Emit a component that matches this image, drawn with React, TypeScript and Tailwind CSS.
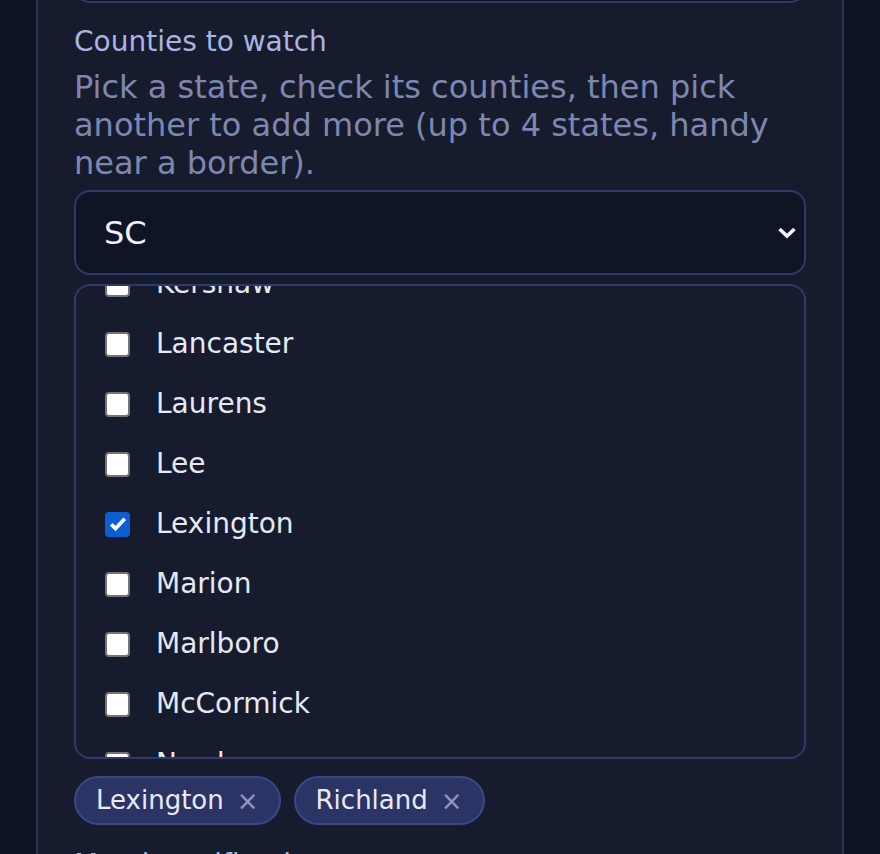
import React, { useEffect, useRef } from "react";

const counties = [
  "Abbeville", "Aiken", "Allendale", "Anderson", "Bamberg", "Barnwell", "Beaufort", "Berkeley",
  "Calhoun", "Charleston", "Cherokee", "Chester", "Chesterfield", "Clarendon", "Colleton",
  "Darlington", "Dillon", "Dorchester", "Edgefield", "Fairfield", "Florence", "Georgetown",
  "Greenville", "Greenwood", "Hampton", "Horry", "Jasper", "Kershaw", "Lancaster", "Laurens",
  "Lee", "Lexington", "Marion", "Marlboro", "McCormick", "Newberry", "Oconee", "Orangeburg",
  "Pickens", "Richland", "Saluda", "Spartanburg", "Sumter", "Union", "Williamsburg", "York",
];

const selected = ["Lexington", "Richland"];

function Checkbox({ checked }: { checked: boolean }) {
  if (checked) {
    return (
      <span className="flex h-[25px] w-[25px] shrink-0 items-center justify-center rounded-[4px] bg-[#0b5fd0]">
        <svg width="20" height="20" viewBox="0 0 16 16" fill="none">
          <path d="M2.6 8.2l3.4 3.4L13.4 3.8" stroke="white" strokeWidth="3" strokeLinecap="butt" />
        </svg>
      </span>
    );
  }
  return <span className="h-[25px] w-[25px] shrink-0 rounded-[4px] border-2 border-[#747474] bg-white" />;
}

export default function App() {
  const listRef = useRef<HTMLDivElement | null>(null);

  useEffect(() => {
    // keep the list scrolled to where Kershaw sits at the top edge
    if (listRef.current) listRef.current.scrollTop = 1662;
  }, []);

  return (
    <div className="h-[854px] w-[880px] overflow-hidden bg-[#0e1322] font-['DejaVu_Sans',sans-serif]">
      <div className="mx-[36px] flex h-full flex-col border-x-2 border-[#283258] bg-[#161c2e] px-[36px]">
        <div className="-mt-[40px] h-[43px] shrink-0 rounded-b-[16px] border-2 border-[#2e3a6b] bg-[#0f1524]" />

        <div className="mt-[22px] text-[28px] leading-[33px] text-[#aab4e2]">Counties to watch</div>
        <p className="mt-[10px] text-[32px] leading-[38px] text-[#7d87b0]">
          Pick a state, check its counties, then pick another to add more (up to 4 states, handy near a border).
        </p>

        <div className="mt-[8px] flex h-[85px] shrink-0 items-center justify-between rounded-[16px] border-2 border-[#2e3a6b] bg-[#0f1524] pl-[28px] pr-[7px]">
          <span className="text-[32px] text-[#f0f2f8]">SC</span>
          <svg width="20" height="14" viewBox="0 0 20 14" fill="none">
            <path d="M2.5 3l7.5 7 7.5-7" stroke="#f0f2f8" strokeWidth="3.6" />
          </svg>
        </div>

        <div
          ref={listRef}
          className="mt-[9px] h-[475px] shrink-0 overflow-y-auto rounded-[16px] border-2 border-[#2e3a6b] py-[10px] [scrollbar-width:none]"
        >
          {counties.map((c) => (
            <div key={c} className="flex h-[60px] items-center gap-[26px] pl-[29px]">
              <Checkbox checked={c === "Lexington"} />
              <span className="text-[28px] text-[#e6e9f4]">{c}</span>
            </div>
          ))}
        </div>

        <div className="mt-[17px] flex shrink-0 gap-[13px]">
          {selected.map((s) => (
            <span
              key={s}
              className="flex h-[49px] items-center gap-[13px] rounded-full border-2 border-[#3b4888] bg-[#2b3465] pl-[20px] pr-[20px] text-[26px] text-[#e8eaf6]"
            >
              {s}
              <span className="text-[26px] leading-none text-[#8f97c2]">×</span>
            </span>
          ))}
        </div>

        <div className="mt-[23px] shrink-0 text-[28px] leading-[33px] text-[#aab4e2]">Match notifications</div>
      </div>
    </div>
  );
}
